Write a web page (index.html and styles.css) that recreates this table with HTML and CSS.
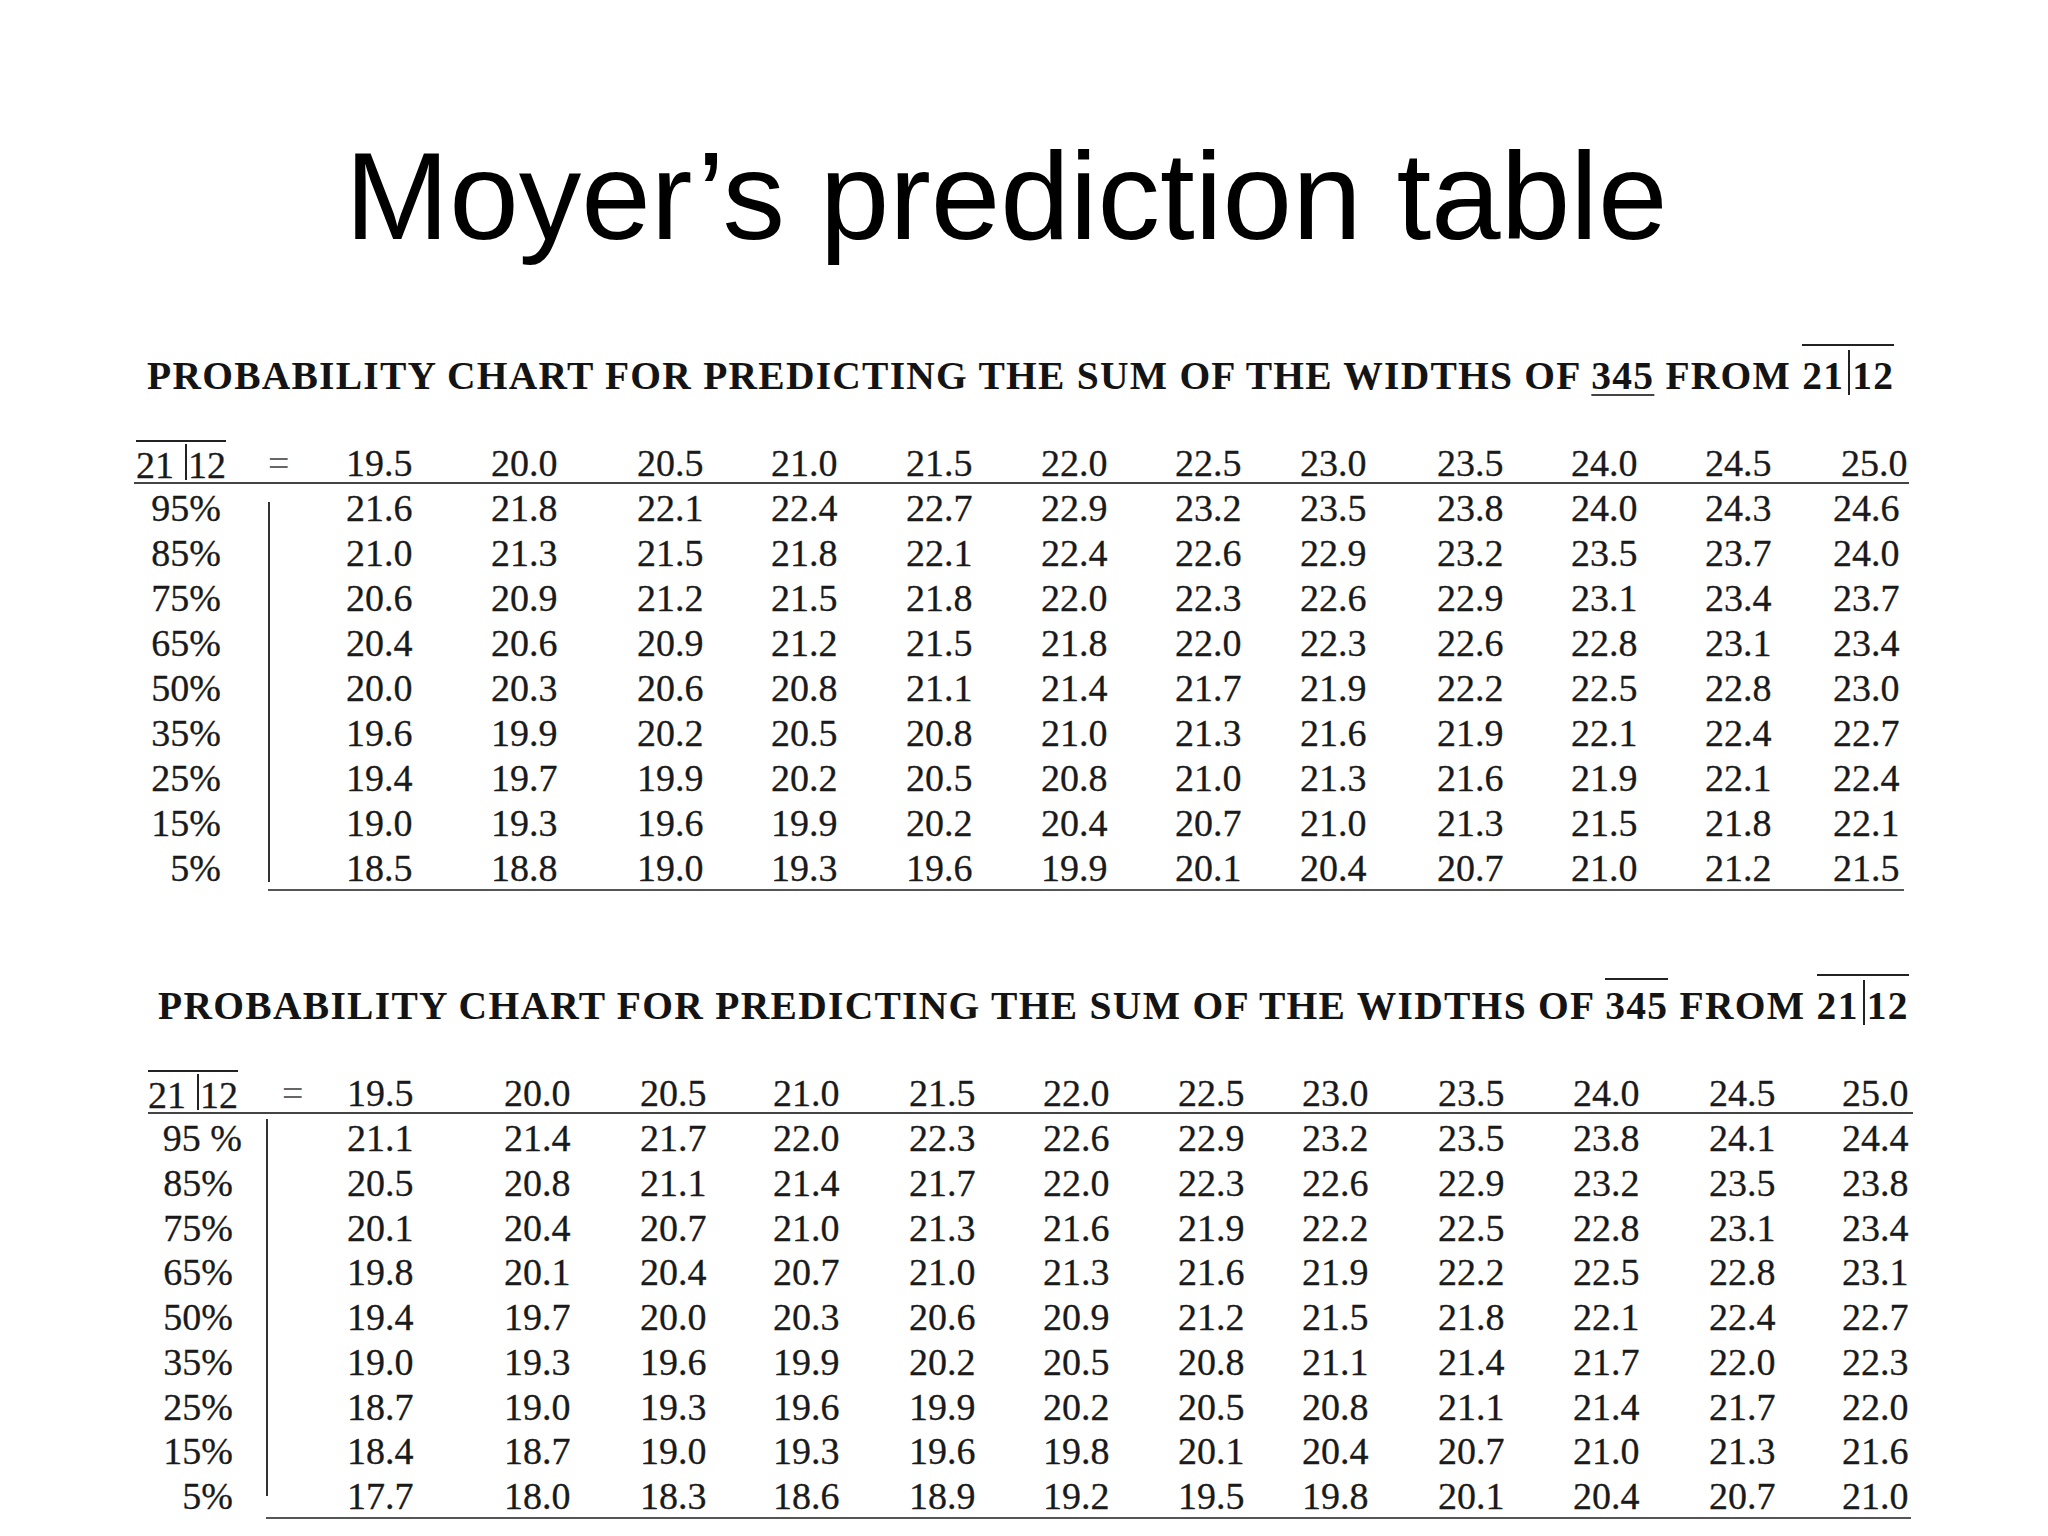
FILE: index.html
```html
<!DOCTYPE html>
<html lang="en">
<head>
<meta charset="utf-8">
<title>Moyer's prediction table</title>
<link rel="stylesheet" href="styles.css">
</head>
<body>
<main class="slide">
  <h1 class="slide-title">Moyer’s prediction table</h1>

  <section class="chart chart-a">
    <h2 class="chart-title">PROBABILITY CHART FOR PREDICTING THE SUM OF THE WIDTHS OF <span class="under">345</span> FROM <span class="tooth"><span class="tl">21</span><span class="tr">12</span></span></h2>
    <div class="head">
      <div class="key"><span class="tooth"><span class="tl">21</span><span class="tr">12</span></span></div>
      <div class="eq">=</div>
      <div class="vals">
        <span>19.5</span><span>20.0</span><span>20.5</span><span>21.0</span><span>21.5</span><span>22.0</span><span>22.5</span><span>23.0</span><span>23.5</span><span>24.0</span><span>24.5</span><span>25.0</span>
      </div>
    </div>
    <div class="body">
      <div class="labels">
        <div>95%</div><div>85%</div><div>75%</div><div>65%</div><div>50%</div><div>35%</div><div>25%</div><div>15%</div><div>5%</div>
      </div>
      <div class="data">
        <div class="vline"></div>
        <div class="grid">
          <span>21.6</span><span>21.8</span><span>22.1</span><span>22.4</span><span>22.7</span><span>22.9</span><span>23.2</span><span>23.5</span><span>23.8</span><span>24.0</span><span>24.3</span><span>24.6</span>
          <span>21.0</span><span>21.3</span><span>21.5</span><span>21.8</span><span>22.1</span><span>22.4</span><span>22.6</span><span>22.9</span><span>23.2</span><span>23.5</span><span>23.7</span><span>24.0</span>
          <span>20.6</span><span>20.9</span><span>21.2</span><span>21.5</span><span>21.8</span><span>22.0</span><span>22.3</span><span>22.6</span><span>22.9</span><span>23.1</span><span>23.4</span><span>23.7</span>
          <span>20.4</span><span>20.6</span><span>20.9</span><span>21.2</span><span>21.5</span><span>21.8</span><span>22.0</span><span>22.3</span><span>22.6</span><span>22.8</span><span>23.1</span><span>23.4</span>
          <span>20.0</span><span>20.3</span><span>20.6</span><span>20.8</span><span>21.1</span><span>21.4</span><span>21.7</span><span>21.9</span><span>22.2</span><span>22.5</span><span>22.8</span><span>23.0</span>
          <span>19.6</span><span>19.9</span><span>20.2</span><span>20.5</span><span>20.8</span><span>21.0</span><span>21.3</span><span>21.6</span><span>21.9</span><span>22.1</span><span>22.4</span><span>22.7</span>
          <span>19.4</span><span>19.7</span><span>19.9</span><span>20.2</span><span>20.5</span><span>20.8</span><span>21.0</span><span>21.3</span><span>21.6</span><span>21.9</span><span>22.1</span><span>22.4</span>
          <span>19.0</span><span>19.3</span><span>19.6</span><span>19.9</span><span>20.2</span><span>20.4</span><span>20.7</span><span>21.0</span><span>21.3</span><span>21.5</span><span>21.8</span><span>22.1</span>
          <span>18.5</span><span>18.8</span><span>19.0</span><span>19.3</span><span>19.6</span><span>19.9</span><span>20.1</span><span>20.4</span><span>20.7</span><span>21.0</span><span>21.2</span><span>21.5</span>
        </div>
      </div>
    </div>
  </section>

  <section class="chart chart-b">
    <h2 class="chart-title">PROBABILITY CHART FOR PREDICTING THE SUM OF THE WIDTHS OF <span class="over">345</span> FROM <span class="tooth"><span class="tl">21</span><span class="tr">12</span></span></h2>
    <div class="head">
      <div class="key"><span class="tooth"><span class="tl">21</span><span class="tr">12</span></span></div>
      <div class="eq">=</div>
      <div class="vals">
        <span>19.5</span><span>20.0</span><span>20.5</span><span>21.0</span><span>21.5</span><span>22.0</span><span>22.5</span><span>23.0</span><span>23.5</span><span>24.0</span><span>24.5</span><span>25.0</span>
      </div>
    </div>
    <div class="body">
      <div class="labels">
        <div class="wide">95 %</div><div>85%</div><div>75%</div><div>65%</div><div>50%</div><div>35%</div><div>25%</div><div>15%</div><div>5%</div>
      </div>
      <div class="data">
        <div class="vline"></div>
        <div class="grid">
          <span>21.1</span><span>21.4</span><span>21.7</span><span>22.0</span><span>22.3</span><span>22.6</span><span>22.9</span><span>23.2</span><span>23.5</span><span>23.8</span><span>24.1</span><span>24.4</span>
          <span>20.5</span><span>20.8</span><span>21.1</span><span>21.4</span><span>21.7</span><span>22.0</span><span>22.3</span><span>22.6</span><span>22.9</span><span>23.2</span><span>23.5</span><span>23.8</span>
          <span>20.1</span><span>20.4</span><span>20.7</span><span>21.0</span><span>21.3</span><span>21.6</span><span>21.9</span><span>22.2</span><span>22.5</span><span>22.8</span><span>23.1</span><span>23.4</span>
          <span>19.8</span><span>20.1</span><span>20.4</span><span>20.7</span><span>21.0</span><span>21.3</span><span>21.6</span><span>21.9</span><span>22.2</span><span>22.5</span><span>22.8</span><span>23.1</span>
          <span>19.4</span><span>19.7</span><span>20.0</span><span>20.3</span><span>20.6</span><span>20.9</span><span>21.2</span><span>21.5</span><span>21.8</span><span>22.1</span><span>22.4</span><span>22.7</span>
          <span>19.0</span><span>19.3</span><span>19.6</span><span>19.9</span><span>20.2</span><span>20.5</span><span>20.8</span><span>21.1</span><span>21.4</span><span>21.7</span><span>22.0</span><span>22.3</span>
          <span>18.7</span><span>19.0</span><span>19.3</span><span>19.6</span><span>19.9</span><span>20.2</span><span>20.5</span><span>20.8</span><span>21.1</span><span>21.4</span><span>21.7</span><span>22.0</span>
          <span>18.4</span><span>18.7</span><span>19.0</span><span>19.3</span><span>19.6</span><span>19.8</span><span>20.1</span><span>20.4</span><span>20.7</span><span>21.0</span><span>21.3</span><span>21.6</span>
          <span>17.7</span><span>18.0</span><span>18.3</span><span>18.6</span><span>18.9</span><span>19.2</span><span>19.5</span><span>19.8</span><span>20.1</span><span>20.4</span><span>20.7</span><span>21.0</span>
        </div>
      </div>
    </div>
  </section>
</main>
</body>
</html>
```

FILE: styles.css
```css
html, body {
  margin: 0;
  padding: 0;
  background: #ffffff;
}

.slide {
  width: 2048px;
  height: 1536px;
  box-sizing: border-box;
  padding-top: 134px;
  overflow: hidden;
}

.slide-title {
  margin: 0 0 0 345px;
  font-family: "Liberation Sans", Arial, sans-serif;
  font-weight: 400;
  font-size: 125px;
  line-height: 124px;
  color: #000000;
  white-space: nowrap;
}

.chart {
  font-family: "Liberation Serif", "Times New Roman", serif;
  color: #1a1a1a;
}

.chart-a {
  margin: 86px 0 0 134px;
  width: 1775px;
}

.chart-b {
  margin: 83px 0 0 148px;
  width: 1765px;
}

.chart-title {
  margin: 0 0 34px 0;
  font-weight: 700;
  font-size: 39.5px;
  line-height: 60px;
  letter-spacing: 1.25px;
  white-space: nowrap;
  color: #141414;
}

.chart-a .chart-title {
  margin-left: 13px;
}

.chart-b .chart-title {
  margin-left: 10px;
  letter-spacing: 1.3px;
}

.under {
  text-decoration: underline;
  text-decoration-thickness: 2px;
  text-underline-offset: 5px;
  text-decoration-color: #444;
}

.over {
  display: inline-block;
  line-height: 38px;
  padding-top: 7px;
  border-top: 2px solid #222;
}

.tooth {
  display: inline-block;
  border-top: 2px solid #222;
}

.tooth .tl,
.tooth .tr {
  display: inline-block;
}

.tooth .tl {
  border-right: 2px solid #222;
}

.chart-title .tooth .tl,
.chart-title .tooth .tr {
  line-height: 38px;
  padding-top: 7px;
}

.chart-title .tooth .tl {
  padding-right: 4px;
}

.chart-title .tooth .tr {
  padding-left: 2px;
}

/* header row */
.head {
  display: flex;
  height: 42px;
  font-size: 38px;
  line-height: 46px;
  border-bottom: 2px solid #444;
  -webkit-text-stroke: 0.3px #1a1a1a;
}

.head .tooth .tl,
.head .tooth .tr {
  line-height: 30px;
  padding-top: 6px;
}

.head .tooth .tl {
  padding-right: 11px;
}

.head .tooth .tr {
  padding-left: 1px;
}

.key {
  box-sizing: border-box;
  width: 134px;
  flex: none;
}

.chart-a .key {
  padding-left: 2px;
}

.eq {
  flex: none;
  color: #666;
  -webkit-text-stroke: 0;
}

.chart-a .eq {
  width: 78px;
}

.chart-b .eq {
  width: 65px;
}

.vals {
  flex: 1;
  display: grid;
}

.chart-a .vals {
  grid-template-columns: 145px 146px 134px 135px 135px 134px 125px 137px 134px 134px 136px 1fr;
}

.chart-b .vals {
  grid-template-columns: 157px 136px 133px 136px 134px 135px 124px 136px 135px 136px 133px 1fr;
}

/* body */
.body {
  display: flex;
  font-size: 38px;
  -webkit-text-stroke: 0.3px #1a1a1a;
}

.labels {
  flex: none;
  box-sizing: border-box;
  text-align: right;
}

.labels div,
.grid span {
  display: block;
  box-sizing: border-box;
  padding-top: 4px;
}

.chart-a .labels {
  width: 134px;
  padding-right: 47px;
}

.chart-b .labels {
  width: 118px;
  padding-right: 33px;
}

.chart-b .labels .wide {
  margin-right: -9px;
}

.chart-a .labels div,
.chart-a .grid span {
  height: 45px;
  line-height: 41px;
}

.chart-b .labels div,
.chart-b .grid span {
  height: 44.75px;
  line-height: 40.75px;
}

.data {
  flex: 1;
  display: flex;
  border-bottom: 2px solid #555;
}

.chart-a .data {
  margin-right: 5px;
}

.chart-b .data {
  margin-right: 2px;
}

.vline {
  flex: none;
  width: 2px;
  background: #333;
}

.chart-a .vline {
  margin: 18px 0 7px 0;
}

.chart-b .vline {
  margin: 5px 0 21px 0;
}

.grid {
  flex: 1;
  display: grid;
}

.chart-a .grid {
  padding-left: 76px;
  grid-template-columns: 145px 146px 134px 135px 135px 134px 125px 137px 134px 134px 128px 1fr;
}

.chart-b .grid {
  padding-left: 79px;
  grid-template-columns: 157px 136px 133px 136px 134px 135px 124px 136px 135px 136px 133px 1fr;
}
```
